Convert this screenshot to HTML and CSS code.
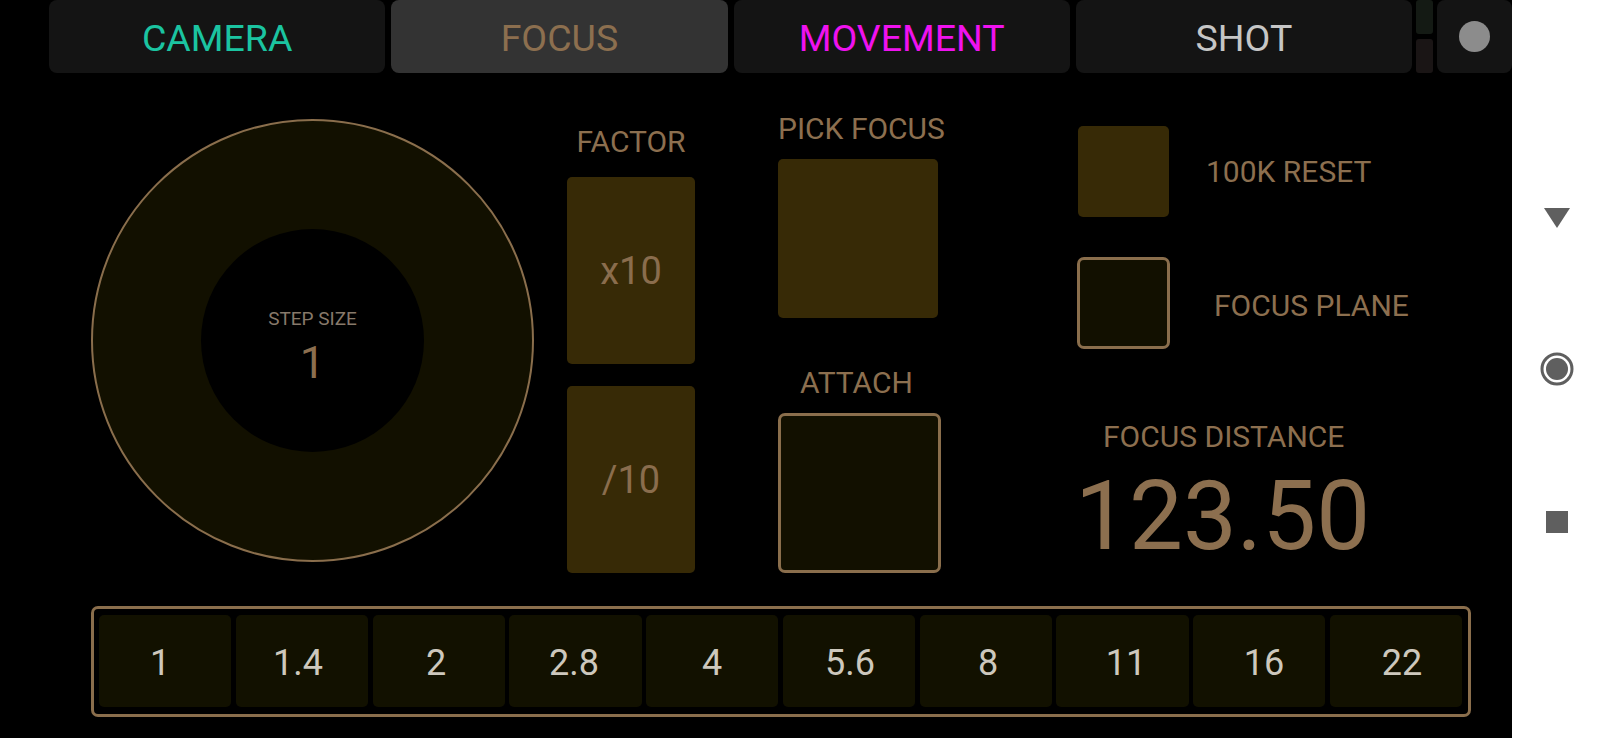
FILE: index.html
```html
<!DOCTYPE html>
<html lang="en">
<head>
<meta charset="utf-8">
<title>Focus</title>
<link rel="stylesheet" href="styles.css">
</head>
<body>
<div class="screen">
  <div class="app">
    <div class="tabs">
      <div class="tab tab-camera">CAMERA</div>
      <div class="tab tab-focus">FOCUS</div>
      <div class="tab tab-movement">MOVEMENT</div>
      <div class="tab tab-shot">SHOT</div>
      <div class="split">
        <div class="split-top"></div>
        <div class="split-bottom"></div>
      </div>
      <div class="tab tab-dot"><span class="dot"></span></div>
    </div>

    <div class="main">
      <div class="col col-wheel">
        <div class="wheel">
          <div class="wheel-inner">
            <div class="step-label">STEP SIZE</div>
            <div class="step-value">1</div>
          </div>
        </div>
      </div>

      <div class="col col-factor">
        <div class="label label-factor">FACTOR</div>
        <div class="btn factor-btn">x10</div>
        <div class="btn factor-btn factor-gap">/10</div>
      </div>

      <div class="col col-pick">
        <div class="label">PICK FOCUS</div>
        <div class="btn pick-btn"></div>
        <div class="label attach-label">ATTACH</div>
        <div class="btn attach-btn"></div>
      </div>

      <div class="col col-right">
        <div class="check-row">
          <div class="btn check check-filled"></div>
          <div class="label check-label">100K RESET</div>
        </div>
        <div class="check-row check-row-2">
          <div class="btn check check-outline"></div>
          <div class="label check-label check-label-2">FOCUS PLANE</div>
        </div>
        <div class="label distance-label">FOCUS DISTANCE</div>
        <div class="distance-value">123.50</div>
      </div>
    </div>

    <div class="fstops">
      <div class="fstop-cells">
        <div class="fstop-cell"></div>
        <div class="fstop-cell"></div>
        <div class="fstop-cell"></div>
        <div class="fstop-cell"></div>
        <div class="fstop-cell"></div>
        <div class="fstop-cell"></div>
        <div class="fstop-cell"></div>
        <div class="fstop-cell"></div>
        <div class="fstop-cell"></div>
        <div class="fstop-cell"></div>
      </div>
      <div class="fstop-labels">
        <span class="fstop">1</span>
        <span class="fstop">1.4</span>
        <span class="fstop">2</span>
        <span class="fstop">2.8</span>
        <span class="fstop">4</span>
        <span class="fstop">5.6</span>
        <span class="fstop">8</span>
        <span class="fstop">11</span>
        <span class="fstop">16</span>
        <span class="fstop">22</span>
      </div>
    </div>
  </div>

  <nav class="sysnav">
    <svg class="nav-back" width="26" height="20" viewBox="0 0 26 20"><polygon points="0,0 26,0 13,20" fill="#5f5f5f"/></svg>
    <svg class="nav-home" width="34" height="34" viewBox="0 0 34 34"><circle cx="17" cy="17" r="15" fill="none" stroke="#5f5f5f" stroke-width="3"/><circle cx="17" cy="17" r="11" fill="#5f5f5f"/></svg>
    <svg class="nav-recent" width="22" height="22" viewBox="0 0 22 22"><rect x="0" y="0" width="22" height="22" fill="#5f5f5f"/></svg>
  </nav>
</div>
</body>
</html>
```

FILE: styles.css
```css
html, body {
  margin: 0;
  padding: 0;
  background: #000;
}

body {
  font-family: Roboto, "Liberation Sans", sans-serif;
}

.screen {
  display: flex;
  width: 1600px;
  height: 738px;
  overflow: hidden;
}

.app {
  width: 1512px;
  height: 738px;
  background: #000;
  display: flex;
  flex-direction: column;
}

/* ---------- tabs ---------- */
.tabs {
  display: flex;
  height: 73px;
  padding-left: 49px;
  gap: 6px;
}

.tab {
  box-sizing: border-box;
  width: 336.5px;
  height: 73px;
  padding-top: 4px;
  border-radius: 8px;
  background: #141414;
  display: flex;
  align-items: center;
  justify-content: center;
  font-size: 37.5px;
  line-height: 1;
}

.tab-camera { color: #1bc4a1; }
.tab-focus { color: #8c6f4f; background: #333333; }
.tab-movement { color: #ef12ef; }
.tab-shot { color: #c6c6c6; }

.split {
  width: 17px;
  margin-left: -2px;
  display: flex;
  flex-direction: column;
  gap: 5px;
}

.split-top,
.split-bottom {
  height: 34px;
  border-radius: 3px;
}

.split-top { background: #141a14; }
.split-bottom { background: #1a1515; }

.tab-dot {
  width: 75px;
  margin-left: -2px;
  padding-top: 0;
}

.dot {
  width: 31px;
  height: 31px;
  border-radius: 50%;
  background: #8c8c8c;
}

/* ---------- main ---------- */
.main {
  display: flex;
  align-items: flex-start;
  height: 533px;
  padding-left: 91px;
}

.col {
  display: flex;
  flex-direction: column;
}

.label {
  font-size: 30px;
  line-height: 30px;
  color: #8c6f4f;
  text-align: center;
  white-space: nowrap;
}

.btn {
  box-sizing: border-box;
  border-radius: 5px;
  background: #372a06;
  display: flex;
  align-items: center;
  justify-content: center;
}

/* wheel */
.col-wheel {
  width: 443px;
  padding-top: 46px;
  margin-right: 33px;
}

.wheel {
  box-sizing: border-box;
  width: 443px;
  height: 443px;
  border: 2px solid #8a6e4c;
  border-radius: 50%;
  background: #121000;
  display: flex;
  align-items: center;
  justify-content: center;
}

.wheel-inner {
  box-sizing: border-box;
  width: 223px;
  height: 223px;
  border-radius: 50%;
  background: #000;
  display: flex;
  flex-direction: column;
  align-items: center;
  padding-top: 80px;
}

.step-label {
  font-size: 19px;
  line-height: 19px;
  color: #87796a;
  margin-bottom: 12px;
}

.step-value {
  font-size: 45px;
  line-height: 45px;
  color: #8c6f4f;
}

/* factor */
.col-factor {
  width: 128px;
  padding-top: 54px;
  margin-right: 83px;
}

.label-factor {
  margin-bottom: 20px;
}

.factor-btn {
  width: 128px;
  height: 187px;
  font-size: 38px;
  color: #8a6d4d;
}

.factor-gap {
  margin-top: 22px;
}

/* pick focus / attach */
.col-pick {
  width: 163px;
  padding-top: 41px;
  margin-right: 136px;
}

.col-pick .label {
  margin-bottom: 15px;
}

.pick-btn {
  width: 160px;
  height: 159px;
}

.col-pick .attach-label {
  margin-top: 50px;
  margin-left: -6px;
}

.attach-btn {
  width: 163px;
  height: 160px;
  background: #121000;
  border: 3px solid #8a6e4c;
  border-radius: 7px;
}

/* right column */
.col-right {
  padding-top: 53px;
}

.check-row {
  display: flex;
  align-items: center;
}

.check-row-2 {
  margin-top: 40px;
}

.check {
  width: 91px;
  height: 91px;
  flex: none;
}

.check-filled {
  margin-left: 1px;
}

.check-outline {
  width: 93px;
  height: 92px;
  background: #121000;
  border: 3px solid #8a6e4c;
  border-radius: 7px;
}

.check-label {
  margin-left: 37px;
  margin-top: 1px;
}

.check-label-2 {
  margin-left: 44px;
  margin-top: 5px;
}

.distance-label {
  text-align: left;
  margin-top: 73px;
  margin-left: 26px;
}

.distance-value {
  margin-top: 16px;
  font-size: 96px;
  line-height: 96px;
  color: #8c6f4f;
  white-space: nowrap;
  margin-left: -2px;
}

/* ---------- f-stops ---------- */
.fstops {
  position: relative;
  box-sizing: border-box;
  margin-left: 91px;
  width: 1380px;
  height: 111px;
  border: 3px solid #8a6e4c;
  border-radius: 7px;
  padding: 6px 6px 7px 5px;
}

.fstop-cells {
  display: flex;
  gap: 4.5px;
  height: 100%;
}

.fstop-cell {
  flex: 1;
  border-radius: 5px;
  background: #121100;
}

.fstop-labels {
  position: absolute;
  top: -3px;
  bottom: -3px;
  left: -3px;
  right: -3px;
  display: grid;
  grid-template-columns: repeat(10, 1fr);
  align-items: center;
  justify-items: center;
}

.fstop {
  font-size: 36px;
  line-height: 36px;
  color: #cdc8bd;
  margin-top: 2px;
}

/* ---------- system nav ---------- */
.sysnav {
  width: 88px;
  height: 738px;
  background: #fff;
  display: flex;
  flex-direction: column;
  align-items: center;
  padding-top: 208px;
  box-sizing: border-box;
}

.nav-back {
  margin-left: 1px;
}

.nav-home {
  margin-top: 124px;
  margin-left: 1px;
}

.nav-recent {
  margin-top: 125px;
  margin-left: 1px;
}
```
